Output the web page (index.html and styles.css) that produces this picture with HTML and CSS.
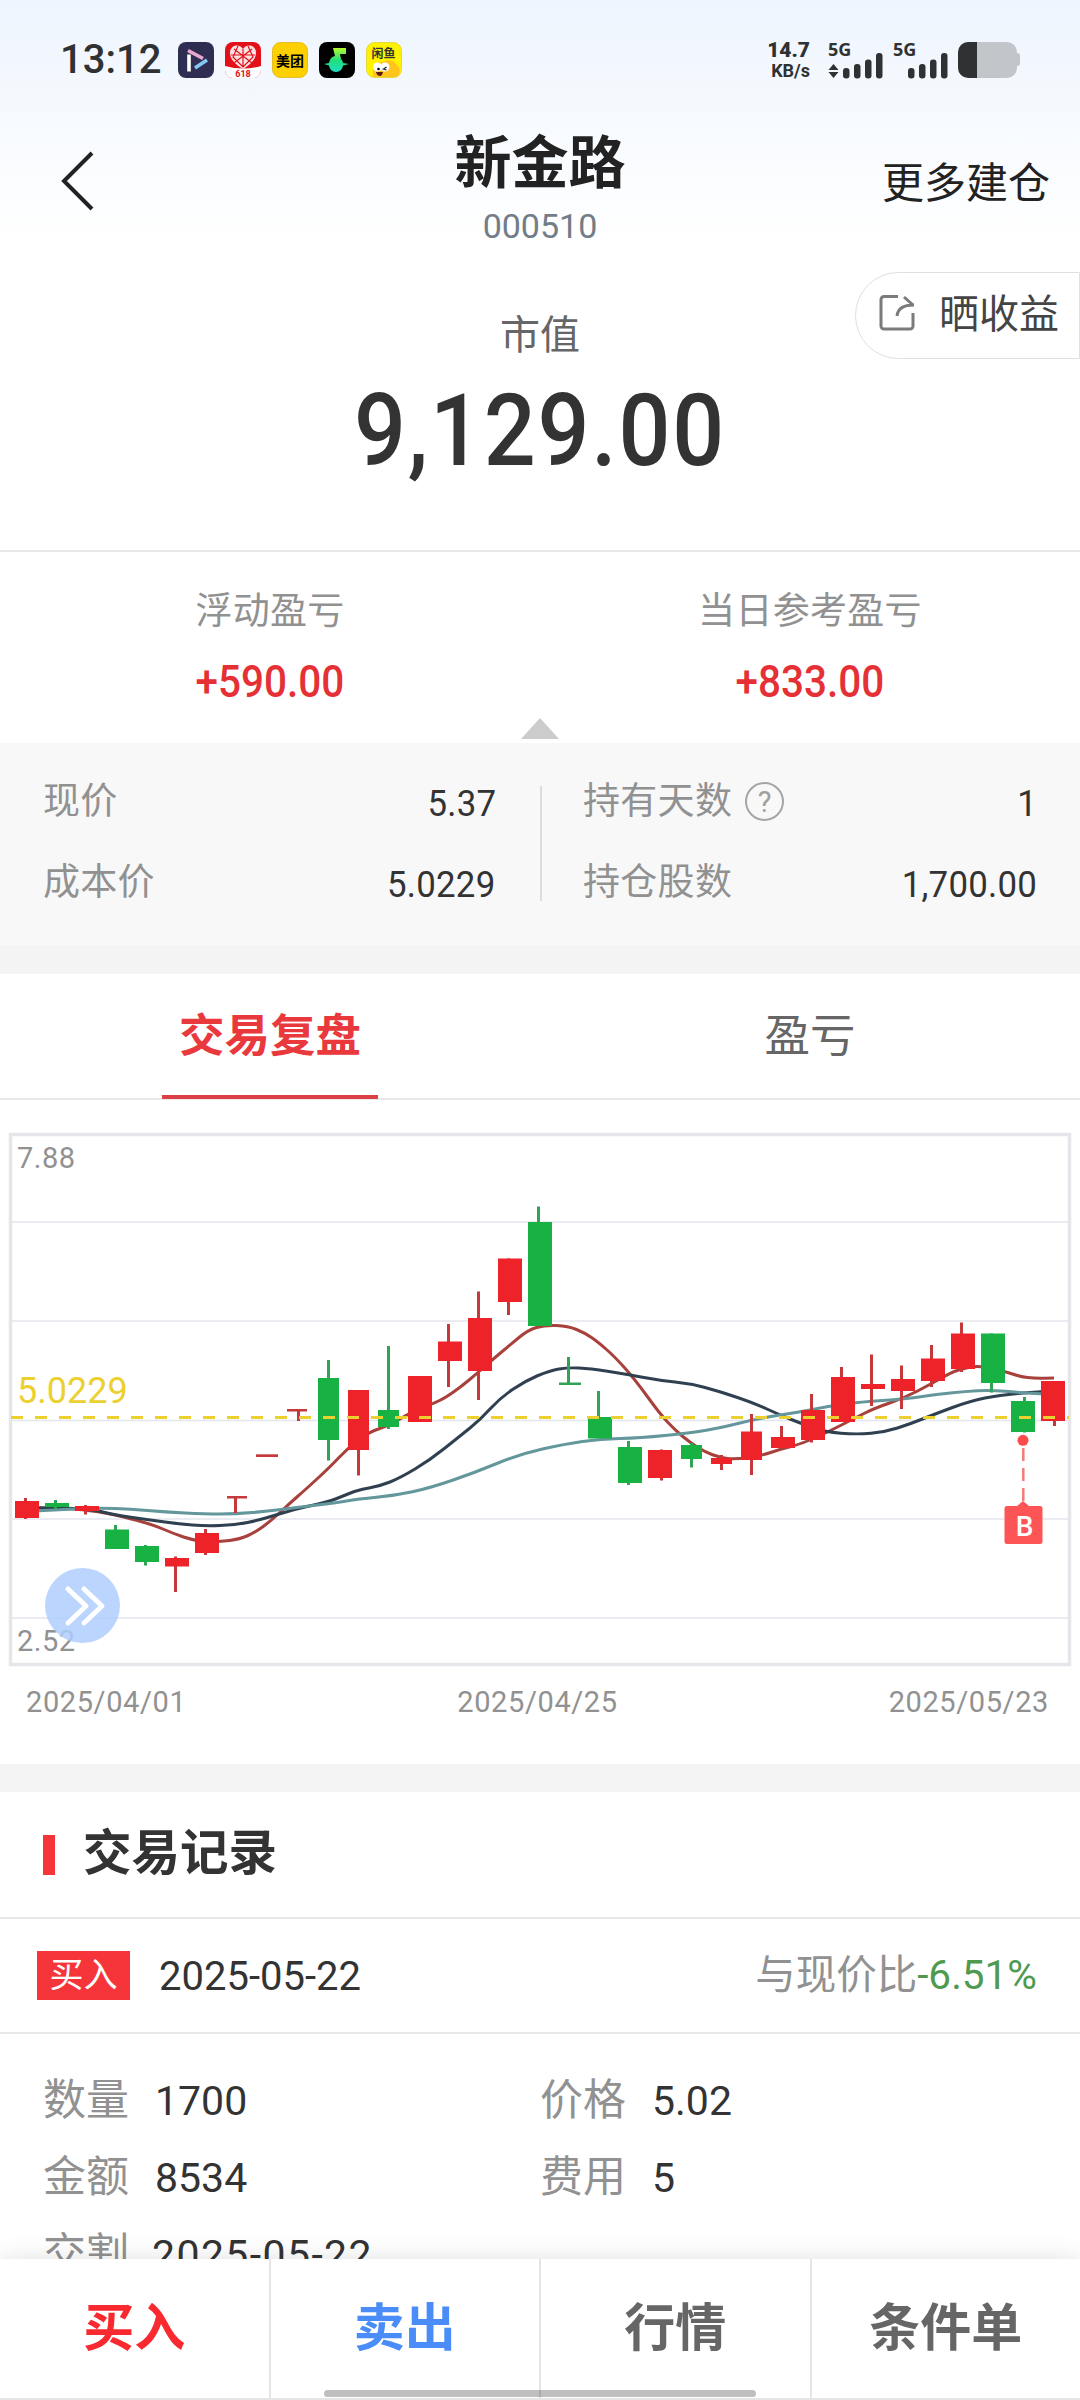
FILE: index.html
```html
<!DOCTYPE html>
<html lang="zh-CN">
<head>
  <meta charset="UTF-8" />
  <meta name="viewport" content="width=device-width, initial-scale=1.0"/>
  <title>新金路 000510</title>
  <link rel="stylesheet" href="styles.css">
</head>
<body>

  <div class="top">
    <!-- Status bar -->
    <div class="status-bar">
      <span class="time">13:12</span>
      <div class="app-icons">
        <svg viewBox="0 0 36 36"><rect width="36" height="36" rx="8" fill="#2f2d52"/><path d="M11 12.500v17" stroke="#fff" stroke-width="3.600"/><path d="M10 8.500l15 8" stroke="#e9a9cf" stroke-width="3.600"/><path d="M29 18l-12 8" stroke="#86c8f5" stroke-width="3.600"/></svg>
        <svg viewBox="0 0 36 36"><rect width="36" height="36" rx="8" fill="#e3101a"/><path d="M0 24q18 5 36 0v4a8 8 0 0 1-8 8H8a8 8 0 0 1-8-8z" fill="#fff"/><path d="M18 27C9 22 5 16 5 11c0-8 9-10 13-4 4-6 13-4 13 4 0 5-4 11-13 16z" fill="#fbe3e3"/><path d="M9 7l18 14M27 7L9 21M18 7v18M6 13h24M13 4l-5 11 10 10 10-10-5-11" fill="none" stroke="#e3101a" stroke-width="1.200"/><text x="18" y="34.500" class="icon-618">618</text></svg>
        <svg viewBox="0 0 36 36"><rect x=".5" y=".5" width="35" height="35" rx="8" fill="#ffd000" stroke="#e3bd22"/><text x="18" y="23.500" class="icon-mt">美团</text></svg>
        <svg viewBox="0 0 36 36"><defs><linearGradient id="mg" x1="0" y1="0" x2="0" y2="1"><stop offset="0" stop-color="#b6fb2e"/><stop offset=".5" stop-color="#1fe07a"/><stop offset="1" stop-color="#1fdcc0"/></linearGradient></defs><rect width="36" height="36" rx="8"/><path d="M14 6h13v6h-6l1 5q2 2 2 4l6 1-6 1.500q-1 6.500-7 6.500t-7-6.500l-5-1.500 5-1q1-6 6-7z" fill="url(#mg)"/></svg>
        <svg viewBox="0 0 36 36"><rect x=".5" y=".5" width="35" height="35" rx="8" fill="#fff200" stroke="#e5d93a"/><path d="M7 35q-2-15 9-15 6-3 11-1l6 6q2 6-2 10z" fill="#ffc51c"/><circle cx="11.500" cy="25" r="4.500" fill="#fff"/><circle cx="19" cy="25" r="4.500" fill="#fff"/><circle cx="12.500" cy="27" r="1.300"/><path d="M20.500 25l-3 2 3 1" fill="none" stroke="#222" stroke-width="1.200"/><path d="M10 30h7q-1 4-3 4-3 0-4-4z" fill="#5b1a12"/><text x="17.500" y="15.500" class="icon-xy">闲鱼</text></svg>
      </div>
      <div class="net-speed"><b>14.7</b><span>KB/s</span></div>
      <svg class="signal" viewBox="0 0 196 38" width="196" height="38">
        <g fill="#303133">
          <text x="0" y="15" class="g5">5G</text>
          <path d="M5.500 23l5 6h-10zM5.500 37l5-6h-10z"/>
          <rect x="15" y="27" width="6.500" height="10.500" rx="3"/>
          <rect x="26" y="23" width="6.500" height="14.500" rx="3"/>
          <rect x="37" y="18.500" width="6.500" height="19" rx="3"/>
          <rect x="48" y="12" width="6.500" height="25.500" rx="3"/>
          <text x="65" y="15" class="g5">5G</text>
          <rect x="80" y="27" width="6.500" height="10.500" rx="3"/>
          <rect x="91" y="23" width="6.500" height="14.500" rx="3"/>
          <rect x="102" y="18.500" width="6.500" height="19" rx="3"/>
          <rect x="113" y="12" width="6.500" height="25.500" rx="3"/>
          <path d="M149 1h-9a10 10 0 0 0-10 10v16a10 10 0 0 0 10 10h9z"/>
        </g>
        <path d="M149 1h30a10 10 0 0 1 10 10v1q3 0 3 3v7q0 3-3 3v2a10 10 0 0 1-10 10h-30z" fill="#c2c5c9"/>
      </svg>
    </div>

    <!-- Header -->
    <div class="header">
      <svg class="back" viewBox="0 0 34 60" width="34" height="60"><path d="M32 2L4 30l28 28" fill="none" stroke="#222" stroke-width="4"/></svg>
      <div class="stock">
        <h1>新金路</h1>
        <p>000510</p>
      </div>
      <span class="more">更多建仓</span>
    </div>

    <div class="market-value">
      <p class="label">市值</p>
      <p class="amount">9,129.00</p>
    </div>

    <div class="share">
      <svg viewBox="0 0 38 38" width="38" height="38" fill="none" stroke="#7b7b7b" stroke-width="3"><path d="M20 2.500H6a3 3 0 0 0-3 3v26.500a3 3 0 0 0 3 3h26a3 3 0 0 0 3-3V19"/><path d="M19 22q1-11 17-11M26 3l9 8"/></svg>
      <span>晒收益</span>
    </div>
  </div>

  <div class="profit">
    <div class="profit-item">
      <p>浮动盈亏</p>
      <b>+590.00</b>
    </div>
    <div class="profit-item">
      <p>当日参考盈亏</p>
      <b>+833.00</b>
    </div>
    <i class="arrow-up"></i>
  </div>

  <div class="detail">
    <div class="detail-col">
      <div class="detail-row"><span>现价</span><em>5.37</em></div>
      <div class="detail-row"><span>成本价</span><em>5.0229</em></div>
    </div>
    <div class="divider"></div>
    <div class="detail-col right">
      <div class="detail-row"><span>持有天数</span><i class="help">?</i><em>1</em></div>
      <div class="detail-row"><span>持仓股数</span><em>1,700.00</em></div>
    </div>
  </div>

  <div class="gap"></div>

  <div class="tabs">
    <div class="tab active">交易复盘</div>
    <div class="tab">盈亏</div>
  </div>

  <!-- K line chart -->
  <div class="chart">
    <svg id="kline" viewBox="0 0 1080 556" width="1080" height="556">
      <g stroke="#e4e6ee" stroke-width="1.500">
        <path d="M12 102h1056M12 201h1056M12 300.500h1056M12 399h1056M12 498h1056"/>
      </g>
      <rect x="10.500" y="14.500" width="1059" height="530" fill="none" stroke="#e5e6ea" stroke-width="3.500"/>
      <text x="17" y="47.500" class="axis">7.88</text>
      <text x="17" y="530.500" class="axis">2.52</text>
      <g id="lines" fill="none" stroke-width="3"></g>
      <g id="candles"></g>
      <path d="M11 297.500H1069" stroke="#ecd030" stroke-width="3" stroke-dasharray="12 12"/>
      <text x="17" y="283" class="cost">5.0229</text>
      <!-- buy marker -->
      <path d="M1023.300 328V382" stroke="#f07c7c" stroke-width="2.500" stroke-dasharray="13 7"/>
      <circle cx="1023" cy="320.300" r="5.500" fill="#fc4a4a"/>
      <path d="M1007 386h10l6-5 6 5h11q2.500 0 2.500 2.500v33q0 2.500-2.500 2.500h-33q-2.500 0-2.500-2.500v-33q0-2.500 2.500-2.500z" fill="#fd5556"/>
      <text x="1024.500" y="415.500" class="buy">B</text>
      <!-- expand button -->
      <circle cx="82.500" cy="485.500" r="37.500" fill="#aecdff" fill-opacity=".84"/>
      <path d="M68 469l18 17-18 17M84 469l18 17-18 17" fill="none" stroke="#fff" stroke-width="5" stroke-linecap="round" stroke-linejoin="round"/>
    </svg>
    <div class="dates">
      <span>2025/04/01</span>
      <span>2025/04/25</span>
      <span>2025/05/23</span>
    </div>
  </div>

  <div class="gap small"></div>

  <!-- Trade records -->
  <div class="records">
    <h2>交易记录</h2>
    <div class="record-head">
      <span class="tag">买入</span>
      <span class="date">2025-05-22</span>
      <span class="compare">与现价比<b>-6.51%</b></span>
    </div>
    <div class="record-body">
      <p><span>数量</span>1700</p>
      <p><span>价格</span>5.02</p>
      <p><span>金额</span>8534</p>
      <p><span>费用</span>5</p>
      <p class="settle"><span>交割</span>2025-05-22</p>
    </div>
  </div>

  <div class="bottom-bar">
    <div class="buy-btn">买入</div>
    <div class="sell-btn">卖出</div>
    <div>行情</div>
    <div>条件单</div>
    <i class="home-line"></i>
  </div>

  <script>
    // [left, width, body top, body bottom, wick x, wick top, wick bottom, color]
    const candles = [
      [15, 24, 381, 398, 25.5, 378, 399, 'r'],
      [45, 24, 383, 387, 55.5, 380, 389, 'g'],
      [75, 24, 386, 391, 85.5, 385, 394.5, 'r'],
      [105, 24, 409.5, 429, 115.5, 405, 429, 'g'],
      [135, 24, 426, 442, 145.5, 425, 445.5, 'g'],
      [165, 24, 438, 446.5, 175.5, 436.5, 472, 'r'],
      [195, 24, 413, 433, 205.5, 409, 435, 'r'],
      [227, 20, 376, 378.5, 235.5, 377, 393, 'r'],
      [256, 22, 334.3, 337, 268, 335, 336, 'r'],
      [287, 20, 289, 291.5, 298.5, 290, 301, 'r'],
      [318, 21, 258, 320, 328.5, 240, 340.5, 'g'],
      [348, 21, 270, 330, 358.5, 270, 355.5, 'r'],
      [378, 21, 290, 307, 388.5, 226, 309, 'g'],
      [408, 24, 256, 302, 418.5, 256, 302, 'r'],
      [438, 24, 221.5, 241, 448.5, 204, 267, 'r'],
      [468, 24, 198, 251, 478.5, 171.5, 280, 'r'],
      [498, 24, 138.5, 182, 508.5, 138.5, 195, 'r'],
      [528, 24, 102, 206, 538.5, 86.5, 206, 'g'],
      [559, 22, 262.5, 265, 568.5, 237, 264, 'g'],
      [588, 24, 297, 318.5, 598.5, 271, 318, 'g'],
      [618, 24, 327, 363, 628.5, 321, 365, 'g'],
      [648, 24, 330, 358, 661.5, 329.5, 360.5, 'r'],
      [681, 21, 325, 339, 691.5, 323, 347.5, 'g'],
      [711, 21, 338, 344, 721.5, 335, 350, 'r'],
      [741, 21, 311.5, 340, 751.5, 294, 355, 'r'],
      [771, 24, 317, 328, 781.5, 306, 328, 'r'],
      [801, 24, 290, 320, 811.5, 274, 322.5, 'r'],
      [831, 24, 257, 302, 841.5, 247, 302, 'r'],
      [861, 24, 264, 269, 871.5, 234.5, 286, 'r'],
      [891, 24, 259, 271, 901.5, 245.5, 289, 'r'],
      [921, 24, 238.5, 261, 931.5, 225, 267, 'r'],
      [951, 24, 213.5, 249, 961.5, 202.5, 252, 'r'],
      [981, 24, 213.5, 263, 991.5, 213.5, 272.5, 'g'],
      [1011, 24, 281, 312, 1024.5, 277, 312.5, 'g'],
      [1041, 24, 261, 301, 1054.5, 261, 306, 'r']
    ];

    const averages = [
      { color: '#a8403c', points: [25,389, 39,388, 69,388, 100,392, 115,395, 130,398.5, 155,405.5, 172,413, 195,421, 219,422, 240,419, 255,412.5, 272,400, 290,383, 305,370, 330,347, 348,328, 369,312, 388,306, 408,294, 432,284, 445,278, 462,266, 478,252.5, 492,240, 510,225, 528,210, 545,205, 568,206, 585,213, 598,222, 615,237, 635,259.5, 660,294, 675,310, 690,322.5, 705,332, 720,337.5, 735,339.5, 762,335.5, 781,329, 801,324, 828,312, 855,298, 875,288, 903,278.5, 931,264, 951,252.5, 965,248, 980,245.5, 1005,251.5, 1020,256.5, 1035,258.5, 1054,258] },
      { color: '#2f4050', points: [25,387, 39,388, 69,388, 95,390, 115,395, 150,400, 180,404, 205,406, 235,405, 260,400, 295,389, 328,382, 343,376, 358,370, 380,366, 400,358, 430,340, 460,316, 480,300, 500,278, 525,261, 550,250.5, 568,247.5, 590,248.5, 625,254, 660,260.5, 690,263.5, 720,271.5, 755,283.5, 780,295, 800,303, 825,312, 857,314.5, 885,312, 910,304, 935,294, 970,281, 1000,275, 1041,271.5, 1054,271] },
      { color: '#64979c', points: [25,391, 39,391, 69,389, 100,388, 130,389, 165,392, 205,394, 235,394, 270,391, 300,387, 335,383, 358,379, 395,375.5, 430,368, 475,352.5, 520,334, 565,324, 600,319, 640,318, 690,313, 720,308, 760,298, 800,292, 830,286, 860,282, 905,279, 940,274, 965,271.5, 990,270, 1020,272.5, 1041,274, 1054,274] }
    ];

    const colors = { r: ['#ee232a', '#c6393b'], g: ['#17b144', '#31a356'] };

    document.getElementById('candles').innerHTML = candles.map(([x, w, top, bottom, wx, high, low, c]) => {
      const thin = bottom - top < 3;
      return `<rect x="${wx - 1.5}" y="${high}" width="3" height="${low - high}" fill="${colors[c][1]}"/>` +
        `<rect x="${x}" y="${top}" width="${w}" height="${bottom - top}" fill="${colors[c][thin ? 1 : 0]}"/>`;
    }).join('');

    // smooth curve through the midpoints
    document.getElementById('lines').innerHTML = averages.map(({ color, points: p }) => {
      let d = `M${p[0]} ${p[1]}`;
      for (let i = 2; i < p.length - 2; i += 2) {
        d += `Q${p[i]} ${p[i + 1]} ${(p[i] + p[i + 2]) / 2} ${(p[i + 1] + p[i + 3]) / 2}`;
      }
      d += `L${p[p.length - 2]} ${p[p.length - 1]}`;
      return `<path d="${d}" stroke="${color}"/>`;
    }).join('');
  </script>

</body>
</html>
```

FILE: styles.css
```css
* {
  box-sizing: border-box;
}

body {
  margin: 0;
  width: 1080px;
  height: 2400px;
  overflow: hidden;
  background: #fff;
  color: #333;
  font-family: Roboto, "Noto Sans CJK SC", sans-serif;
  line-height: 1.2;
}

p, h1, h2 {
  margin: 0;
}

i, em {
  font-style: normal;
}

.top {
  position: relative;
  height: 552px;
  background: linear-gradient(#eef5fe 0, #fff 240px);
  border-bottom: 2px solid #e8e8e8;
}

/* Status bar */
.status-bar {
  display: flex;
  align-items: center;
  height: 120px;
  padding: 0 56px 0 60px;
  color: #303133;
}

.time {
  width: 118px;
  font-size: 40px;
  font-weight: 500;
}

.app-icons {
  display: flex;
  gap: 11px;
}

.app-icons svg {
  width: 36px;
  height: 36px;
}

.icon-618 {
  font: bold 9px Roboto, sans-serif;
  fill: #e3101a;
  text-anchor: middle;
}

.icon-mt {
  font: bold 14px "Noto Sans CJK SC", sans-serif;
  text-anchor: middle;
}

.icon-xy {
  font: bold 12px "Noto Sans CJK SC", sans-serif;
  fill: #333;
  text-anchor: middle;
}

.net-speed {
  display: flex;
  flex-direction: column;
  align-items: flex-end;
  margin-left: auto;
  margin-right: 18px;
  font-size: 18px;
  line-height: 19px;
  font-weight: bold;
}

.net-speed b {
  font-size: 21px;
  line-height: 21px;
}

.signal {
  overflow: visible;
}

.g5 {
  font: bold 18px "Open Sans", sans-serif;
}

/* Header */
.header {
  display: flex;
  justify-content: space-between;
  height: 130px;
  padding: 0 30px 0 60px;
}

.back {
  margin-top: 31px;
  margin-right: 104px;
}

.stock {
  padding-top: 11px;
  text-align: center;
}

.stock h1 {
  font-size: 57px;
  line-height: 66px;
  font-weight: bold;
  color: #222;
}

.stock p {
  margin-top: 9px;
  font-size: 34px;
  line-height: 40px;
  color: #727d87;
}

.more {
  font-size: 42px;
  line-height: 128px;
  color: #222;
}

.market-value {
  padding-top: 61px;
  text-align: center;
}

.market-value .label {
  font-size: 40px;
  line-height: 50px;
  color: #666;
}

.market-value .amount {
  margin-top: 20px;
  font-size: 101px;
  line-height: 100px;
  font-weight: 500;
  letter-spacing: 2px;
  transform: scaleX(0.905);
}

.share {
  position: absolute;
  top: 272px;
  right: 0;
  display: flex;
  align-items: center;
  width: 225px;
  height: 87px;
  padding-left: 22px;
  border: 1px solid #e0e0e0;
  border-radius: 44px 0 0 44px;
  background: #fff;
  font-size: 40px;
  line-height: 48px;
  color: #444;
}

.share svg {
  margin-right: 23px;
  margin-top: -5px;
}

.share span {
  margin-top: -2px;
}

/* Profit */
.profit {
  position: relative;
  display: flex;
  height: 191px;
  padding-top: 35px;
  text-align: center;
}

.profit-item {
  flex: 1;
}

.profit-item p {
  font-size: 37px;
  line-height: 50px;
  letter-spacing: 0.3px;
  color: #919191;
}

.profit-item b {
  display: block;
  margin-top: 20px;
  font-size: 44px;
  line-height: 50px;
  font-weight: 500;
  color: #e53035;
  transform: scaleX(0.92);
}

.arrow-up {
  position: absolute;
  left: 521px;
  bottom: 4px;
  border: 19px solid transparent;
  border-top: 0;
  border-bottom: 21px solid #ccc;
}

/* Detail */
.detail {
  display: flex;
  height: 202px;
  padding-top: 19px;
  background: #f8f8f8;
}

.detail-col {
  width: 540px;
  padding: 0 44px 0 43px;
}

.detail-col.right {
  width: 538px;
  padding: 0 43px 0 41px;
}

.detail-row {
  display: flex;
  align-items: center;
  height: 81px;
  font-size: 37px;
  letter-spacing: 0.3px;
  color: #919191;
}

.detail-row em {
  margin-left: auto;
  margin-top: 3px;
  color: #333;
  transform: scaleX(0.94);
  transform-origin: right;
}

.help {
  width: 39px;
  height: 39px;
  margin-left: 13px;
  margin-top: -3px;
  border: 2px solid #a5a5a5;
  border-radius: 50%;
  font-size: 29px;
  line-height: 36px;
  text-align: center;
  color: #a0a0a0;
}

.divider {
  width: 2px;
  height: 115px;
  margin-top: 24px;
  background: #ddd;
}

.gap {
  height: 29px;
  background: #f4f4f4;
}

.gap.small {
  height: 28px;
}

/* Tabs */
.tabs {
  display: flex;
  height: 126px;
  border-bottom: 2px solid #e8e8e8;
}

.tab {
  position: relative;
  flex: 1;
  font-size: 45.5px;
  line-height: 126px;
  text-align: center;
  color: #666;
}

.tab.active {
  font-weight: bold;
  color: #ea393d;
}

.tab.active::after {
  content: "";
  position: absolute;
  left: 162px;
  bottom: -1px;
  width: 216px;
  height: 4px;
  background: #dc4045;
}

/* Chart */
.chart {
  height: 664px;
  padding-top: 20px;
}

.chart svg {
  display: block;
}

.axis {
  font-size: 29px;
  letter-spacing: 0.5px;
  fill: #919191;
}

.cost {
  font-size: 36px;
  fill: #ecd030;
}

.buy {
  font-size: 28px;
  font-weight: 500;
  fill: #fff;
  text-anchor: middle;
}

.dates {
  display: flex;
  justify-content: space-between;
  padding: 0 31px 0 26px;
  font-size: 29px;
  line-height: 52px;
  letter-spacing: 0.6px;
  color: #919191;
}

/* Records */
.records h2 {
  display: flex;
  align-items: center;
  height: 127px;
  padding-left: 43px;
  border-bottom: 2px solid #e8e8e8;
  font-size: 48.5px;
  font-weight: bold;
}

.records h2::before {
  content: "";
  width: 12px;
  height: 40px;
  margin-right: 28px;
  background: #f5353a;
}

.record-head {
  display: flex;
  align-items: center;
  height: 115px;
  padding: 0 43px 0 37px;
  border-bottom: 2px solid #e8e8e8;
  font-size: 40px;
}

.tag {
  width: 93px;
  height: 49px;
  margin-right: 29px;
  background: #f5353a;
  font-size: 34px;
  line-height: 49px;
  text-align: center;
  color: #fff;
}

.date {
  margin-top: 2px;
}

.compare {
  margin-left: auto;
  font-size: 40.5px;
  color: #919191;
}

.compare b {
  font-weight: normal;
  color: #4f9a50;
}

.record-body {
  display: grid;
  grid-template-columns: 497px 1fr;
  grid-auto-rows: 77.3px;
  align-items: center;
  padding: 28px 0 0 43px;
  font-size: 41px;
}

.record-body span {
  margin-right: 26px;
  font-size: 43px;
  color: #919191;
}

.record-body .settle {
  letter-spacing: 1.4px;
}

.settle span {
  margin-right: 23px;
  letter-spacing: 0;
}

/* Bottom bar */
.bottom-bar {
  position: fixed;
  left: 0;
  bottom: 0;
  display: flex;
  width: 1080px;
  height: 141px;
  background: #fff;
  border-bottom: 2px solid #e5e5e5;
  box-shadow: 0 0 24px rgba(0, 0, 0, 0.12);
}

.bottom-bar div {
  flex: 1;
  border-right: 2px solid #e5e5e5;
  font-size: 51px;
  line-height: 140px;
  font-weight: bold;
  text-align: center;
  color: #666;
}

.bottom-bar div:nth-child(4) {
  border-right: 0;
}

.bottom-bar .buy-btn {
  color: #f82a30;
}

.bottom-bar .sell-btn {
  color: #4a8df8;
}

.home-line {
  position: absolute;
  left: 324px;
  bottom: 1px;
  width: 432px;
  height: 7px;
  border-radius: 4px;
  background: rgba(0, 0, 0, 0.25);
}
```
